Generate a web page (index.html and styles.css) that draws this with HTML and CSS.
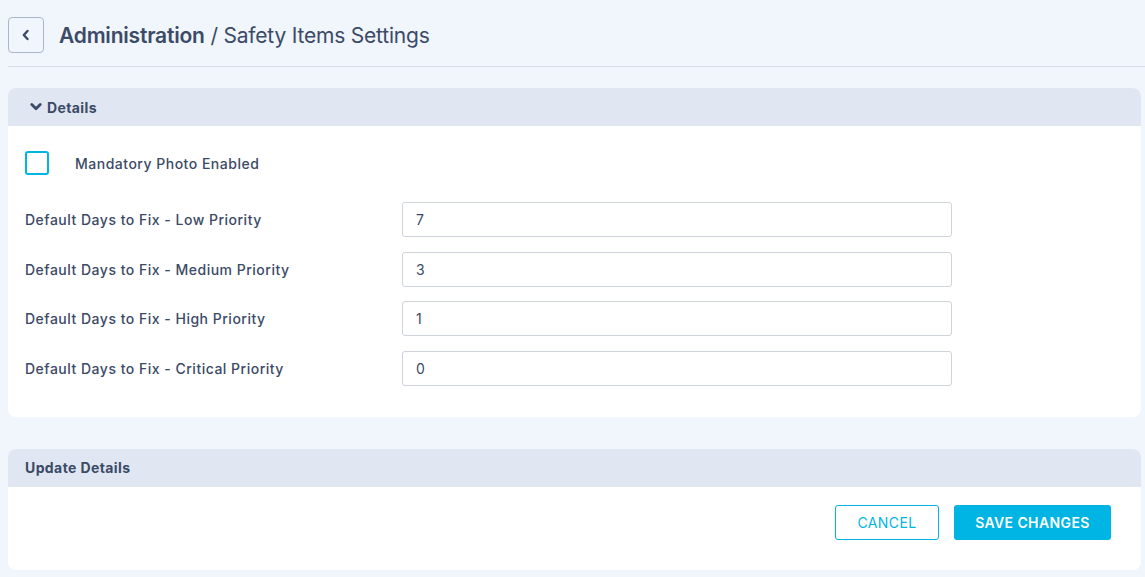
FILE: index.html
```html
<!DOCTYPE html>
<html>

<head>
    <title>Safety Items Settings</title>
    <meta name="viewport" content="width=device-width, initial-scale=1.0">
    <link rel="stylesheet" href="styles.css">
</head>

<body>
    <div class="page-header">
        <button class="back-btn" type="button">
            <svg width="12" height="12" viewBox="0 0 12 12">
                <path d="M7.5 2 L3.8 6 L7.5 10" fill="none" stroke="#3b4a66" stroke-width="2.4" stroke-linecap="round" stroke-linejoin="round" />
            </svg>
        </button>
        <h1 class="title"><span class="title-main">Administration</span> / Safety Items Settings</h1>
    </div>

    <div class="panel">
        <div class="panel-head">
            <svg width="12" height="10" viewBox="0 0 12 10">
                <path d="M1.8 2.6 L6 6.8 L10.2 2.6" fill="none" stroke="#3b4a66" stroke-width="2.8" stroke-linecap="round" stroke-linejoin="round" />
            </svg>
            <span>Details</span>
        </div>
        <div class="panel-body">
            <div class="check-row">
                <span class="checkbox"></span>
                <label>Mandatory Photo Enabled</label>
            </div>

            <div class="field-row">
                <label for="lowDays">Default Days to Fix - Low Priority</label>
                <input type="text" id="lowDays" value="7">
            </div>
            <div class="field-row">
                <label for="mediumDays">Default Days to Fix - Medium Priority</label>
                <input type="text" id="mediumDays" value="3">
            </div>
            <div class="field-row">
                <label for="highDays">Default Days to Fix - High Priority</label>
                <input type="text" id="highDays" value="1">
            </div>
            <div class="field-row">
                <label for="criticalDays">Default Days to Fix - Critical Priority</label>
                <input type="text" id="criticalDays" value="0">
            </div>
        </div>
    </div>

    <div class="panel panel-update">
        <div class="panel-head">
            <span>Update Details</span>
        </div>
        <div class="panel-body actions">
            <button class="btn btn-outline" type="button">CANCEL</button>
            <button class="btn btn-primary" type="button">SAVE CHANGES</button>
        </div>
    </div>
</body>

</html>
```

FILE: styles.css
```css
body {
    font-family: Inter, "Noto Sans", sans-serif;
    background-color: #f1f5fc;
    color: #3b4a66;
    margin: 0;
    padding: 0 4px 0 8px;
}

.page-header {
    display: flex;
    align-items: center;
    gap: 15px;
    padding: 17px 0 13px;
    border-bottom: 1px solid #d8dde6;
    margin-right: -4px;
}

.back-btn {
    width: 36px;
    height: 36px;
    display: flex;
    align-items: center;
    justify-content: center;
    background: transparent;
    border: 1px solid #aab6c9;
    border-radius: 4px;
    padding: 0;
}

.title {
    margin: 0;
    font-size: 21px;
    font-weight: 400;
    letter-spacing: -0.2px;
}

.title-main {
    font-weight: 600;
}

.panel {
    background: white;
    border-radius: 8px;
    margin-top: 21px;
    overflow: hidden;
}

.panel-update {
    margin-top: 32px;
}

.panel-head {
    display: flex;
    align-items: center;
    gap: 5px;
    height: 38px;
    padding: 0 22px;
    background-color: #e1e7f2;
    font-size: 14px;
    font-weight: 700;
    letter-spacing: 0.4px;
}

.panel-update .panel-head {
    padding-left: 17px;
}

.panel-body {
    padding: 25px 17px 31px;
}

.check-row {
    display: flex;
    align-items: center;
    gap: 26px;
    margin-bottom: 27px;
}

.checkbox {
    width: 20px;
    height: 20px;
    border: 2px solid #00b4e4;
    border-radius: 3px;
}

label {
    font-size: 14px;
    font-weight: 500;
    letter-spacing: 0.5px;
}

.field-row {
    display: flex;
    align-items: center;
    margin-bottom: 14.5px;
}

.field-row:last-child {
    margin-bottom: 0;
}

.field-row label {
    width: 377px;
}

.field-row input {
    width: 550px;
    height: 35px;
    box-sizing: border-box;
    padding: 0 13px;
    border: 1px solid #cfd3db;
    border-radius: 3px;
    font-family: inherit;
    font-size: 14px;
    color: #3b4a66;
}

.actions {
    display: flex;
    justify-content: flex-end;
    gap: 15px;
    padding: 18px 30px 30px;
}

.btn {
    height: 35px;
    border-radius: 3px;
    font-family: inherit;
    font-size: 14px;
    letter-spacing: 0.4px;
    cursor: pointer;
}

.btn-outline {
    width: 104px;
    background: white;
    border: 1px solid #00b4e4;
    color: #00b4e4;
}

.btn-primary {
    width: 157px;
    background: #00b4e4;
    border: none;
    color: white;
    font-weight: 600;
}
```
